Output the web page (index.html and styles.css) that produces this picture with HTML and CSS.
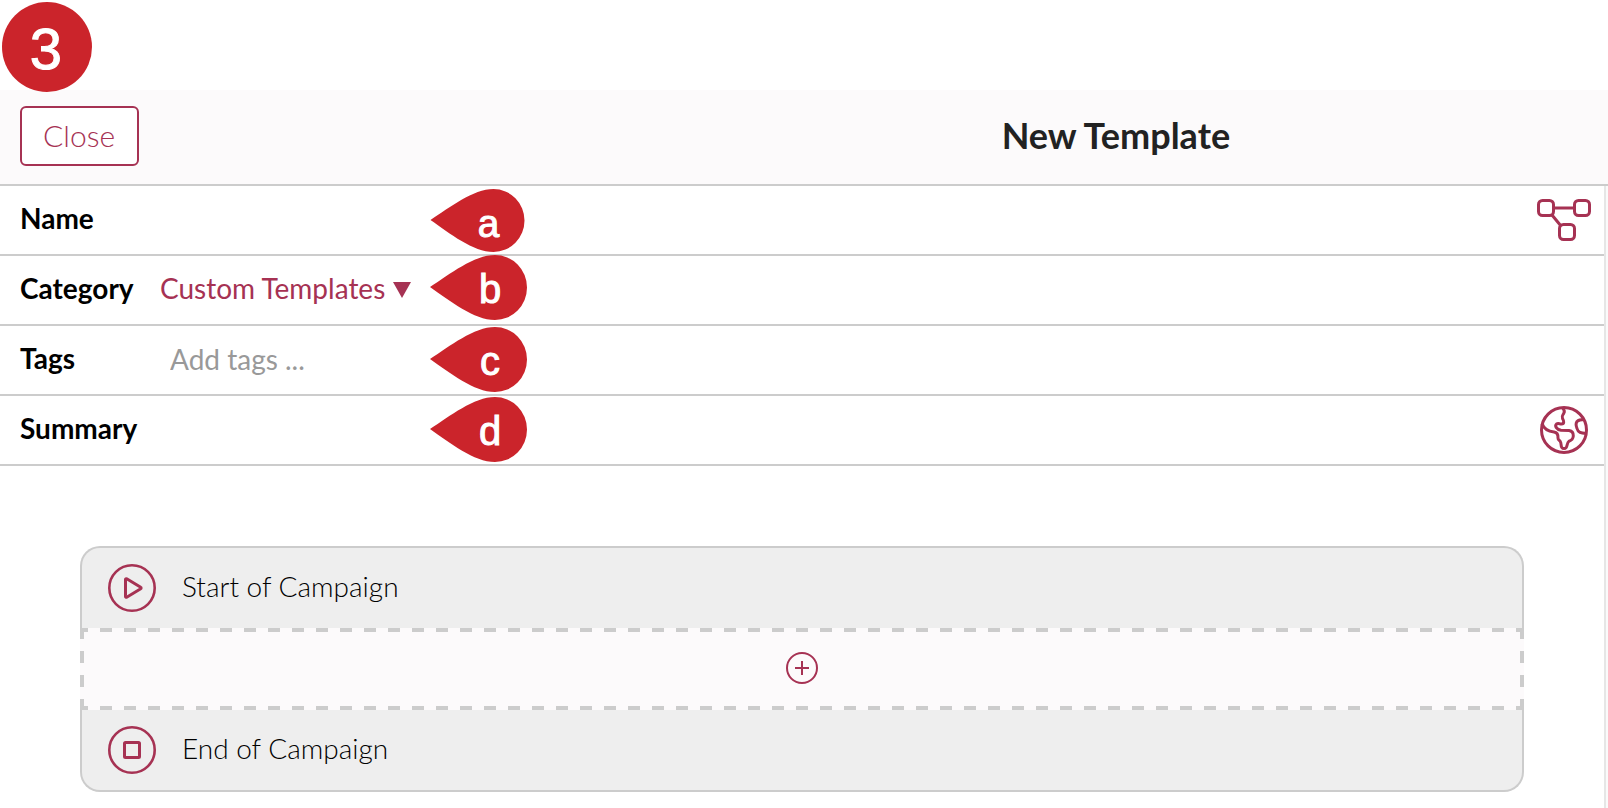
FILE: index.html
```html
<!DOCTYPE html>
<html lang="en">
<head>
<meta charset="utf-8">
<title>New Template</title>
<link rel="stylesheet" href="styles.css">
</head>
<body>
<div class="step-bar">
  <span class="step">3</span>
</div>
<header class="toolbar">
  <button class="close" type="button">Close</button>
  <h1 class="title">New Template</h1>
</header>
<div class="workspace">
  <main class="editor">
    <form class="fields">
      <div class="row">
        <label class="label" for="name">Name</label>
        <input class="input" id="name" type="text">
        <svg class="pin pin-a" viewBox="0 0 97 65"><path d="M0 32C20 19 44 0 65 0a32 32.500 0 0 1 0 65C44 65 20 46 0 32z"/><text x="60" y="50">a</text></svg>
        <button class="icon-button" type="button" aria-label="Workflow">
          <svg class="icon" viewBox="0 0 56 48">
            <rect x="2.500" y="4.500" width="15" height="15" rx="4"/>
            <rect x="38.500" y="4.500" width="15" height="15" rx="4"/>
            <rect x="23.500" y="28.500" width="15" height="15" rx="4"/>
            <path d="M18 12h20M16 19l9 11"/>
          </svg>
        </button>
      </div>
      <div class="row">
        <label class="label" for="category">Category</label>
        <select class="select" id="category"><option>Custom Templates</option></select>
        <svg class="caret" viewBox="0 0 18 16"><path d="M0 0h18L9 16z"/></svg>
        <svg class="pin pin-b" viewBox="0 0 97 65"><path d="M0 32C20 19 44 0 65 0a32 32.500 0 0 1 0 65C44 65 20 46 0 32z"/><text x="60" y="48">b</text></svg>
      </div>
      <div class="row">
        <label class="label" for="tags">Tags</label>
        <input class="input tags" id="tags" type="text" placeholder="Add tags ...">
        <svg class="pin pin-c" viewBox="0 0 97 65"><path d="M0 32C20 19 44 0 65 0a32 32.500 0 0 1 0 65C44 65 20 46 0 32z"/><text x="60" y="48">c</text></svg>
      </div>
      <div class="row">
        <label class="label" for="summary">Summary</label>
        <input class="input" id="summary" type="text">
        <svg class="pin pin-d" viewBox="0 0 97 65"><path d="M0 32C20 19 44 0 65 0a32 32.500 0 0 1 0 65C44 65 20 46 0 32z"/><text x="60" y="48">d</text></svg>
        <button class="icon-button" type="button" aria-label="Visibility">
          <svg class="icon" viewBox="0 0 56 48">
            <circle cx="28" cy="24" r="22.500"/>
            <path d="M26.700 2C28.500 4 29 5.500 27.700 7.500 26.500 9.500 25.500 10 26.500 12.500 28 15 28.500 18 25.500 18 23.500 18 22 17 20.500 18 18.500 20 20.500 23.500 25 24.300L33 24.500C36 25 37.500 27 37.300 30 37 33.500 35.500 34.500 33 35.200 31 36.500 31.500 39.500 30.300 41.300 29 43 27 43 25.700 41.300 24.700 39.500 25.500 37 24.200 35.300 23 34 22 33.800 22 32 22.200 29 21.500 26.500 18 26 12 25.500 8 23 6 17.500"/>
            <path d="M48 13.500C45 13.500 42.500 14 41 15.500 39.500 17.500 40 20 41 22.500 42 26.500 45 27.200 50 27.500"/>
          </svg>
        </button>
      </div>
    </form>
    <section class="flow">
      <div class="stage stage-start">
        <svg class="stage-icon" viewBox="0 0 48 48"><circle cx="24" cy="24" r="22.700"/><path class="heavy" d="M17.500 15.500v17a.800.800 0 0 0 1.200.700l14-8.500a.800.800 0 0 0 0-1.400l-14-8.500a.800.800 0 0 0-1.200.700z"/></svg>
        <span>Start of Campaign</span>
      </div>
      <button class="add" type="button" aria-label="Add step">
        <svg class="add-icon" viewBox="0 0 32 32"><circle cx="16" cy="16" r="15"/><path d="M9 16h14M16 9v14"/></svg>
      </button>
      <div class="stage stage-end">
        <svg class="stage-icon" viewBox="0 0 48 48"><circle cx="24" cy="24" r="22.700"/><rect class="heavy" x="16.500" y="16.500" width="15" height="15" rx="1"/></svg>
        <span>End of Campaign</span>
      </div>
    </section>
  </main>
  <aside class="side"></aside>
</div>
</body>
</html>
```
FILE: styles.css
```css
* { box-sizing: border-box; }

body {
  margin: 0;
  min-height: 100vh;
  display: flex;
  flex-direction: column;
  background: #fff;
  color: #000;
  font-family: Lato, "Open Sans", sans-serif;
  font-size: 28px;
  line-height: 36px;
}

button, input, select {
  margin: 0;
  border: 0;
  background: none;
  color: inherit;
  font: inherit;
}

.step-bar { height: 90px; padding: 2px; }

.step {
  position: relative;
  display: grid;
  place-items: center;
  width: 90px;
  height: 90px;
  padding-top: 4px;
  padding-right: 2px;
  border-radius: 50%;
  background: #cb242b;
  color: #fff;
  font-family: "Liberation Sans", Arial, sans-serif;
  font-size: 58px;
  -webkit-text-stroke: 1px #fff;
}

.toolbar {
  display: flex;
  align-items: center;
  justify-content: space-between;
  padding: 16px 23.5% 18px 20px;
  border-bottom: 2px solid #ccc;
  background: #fcfafb;
}

.close {
  height: 60px;
  padding: 0 22px 2px 21px;
  border: 2px solid #a63253;
  border-radius: 6px;
  background: #fff;
  color: #a63253;
  font-size: 30px;
  font-weight: 300;
}

.title {
  margin: 0;
  padding-bottom: 2px;
  color: #222;
  font-size: 36px;
  font-weight: 700;
}

.workspace { flex: 1; display: flex; }
.editor { flex: 1; min-width: 0; }
.side { width: 4px; border-left: 2px solid #e6e6e6; background: #fafafa; }

.row {
  position: relative;
  display: flex;
  align-items: center;
  height: 70px;
  padding: 0 12px 0 20px;
  border-bottom: 2px solid #ccc;
}

.label { width: 140px; padding-bottom: 4px; font-weight: 700; }
.input { flex: 1; min-width: 0; height: 60px; padding: 0 0 2px; outline: 0; }
.tags { padding-left: 10px; }
.tags::placeholder { color: #999; opacity: 1; }

.select {
  appearance: none;
  padding: 0 6px 4px 0;
  color: #a63253;
}

.caret { width: 18px; height: 16px; fill: #a63253; }

.icon-button { width: 56px; height: 48px; padding: 0; }
.icon { display: block; width: 56px; height: 48px; }

.icon, .stage-icon, .add-icon {
  fill: none;
  stroke: #a63253;
  stroke-width: 3;
  stroke-linejoin: round;
}

.pin {
  position: absolute;
  left: 430px;
  width: 97px;
  height: 65px;
  fill: #cb242b;
}

.pin text {
  fill: #fff;
  stroke: #fff;
  stroke-width: 1px;
  font-family: "Liberation Sans", Arial, sans-serif;
  font-size: 40px;
  text-anchor: middle;
}

.pin-a { top: 3px; width: 95px; height: 63px; }
.pin-b { top: -1px; }
.pin-c { top: 1px; }
.pin-d { top: 1px; }

.flow { padding: 80px 80px 16px; }

.stage {
  display: flex;
  align-items: center;
  gap: 26px;
  height: 82px;
  padding: 0 26px;
  border: 2px solid #ccc;
  background: #eee;
  font-weight: 300;
}

.stage span { padding-bottom: 4px; }
.stage-start { border-bottom: 0; border-radius: 20px 20px 0 0; }
.stage-end { border-top: 0; border-radius: 0 0 20px 20px; }
.stage-icon { width: 48px; height: 48px; stroke-width: 2.6; }
.heavy { stroke-width: 3; }

.add {
  display: grid;
  place-items: center;
  width: 100%;
  height: 82px;
  padding: 0 0 2px;
  background:
    linear-gradient(90deg, transparent 25%, #ccc 25% 75%, transparent 75%) center top / 24px 4px repeat-x,
    linear-gradient(90deg, transparent 25%, #ccc 25% 75%, transparent 75%) center bottom / 24px 4px repeat-x,
    linear-gradient(#ccc 25%, transparent 25% 75%, #ccc 75%) left center / 4px 24px repeat-y,
    linear-gradient(#ccc 25%, transparent 25% 75%, #ccc 75%) right center / 4px 24px repeat-y,
    #fcfafb;
}

.add-icon { width: 32px; height: 32px; stroke-width: 2; }
```
